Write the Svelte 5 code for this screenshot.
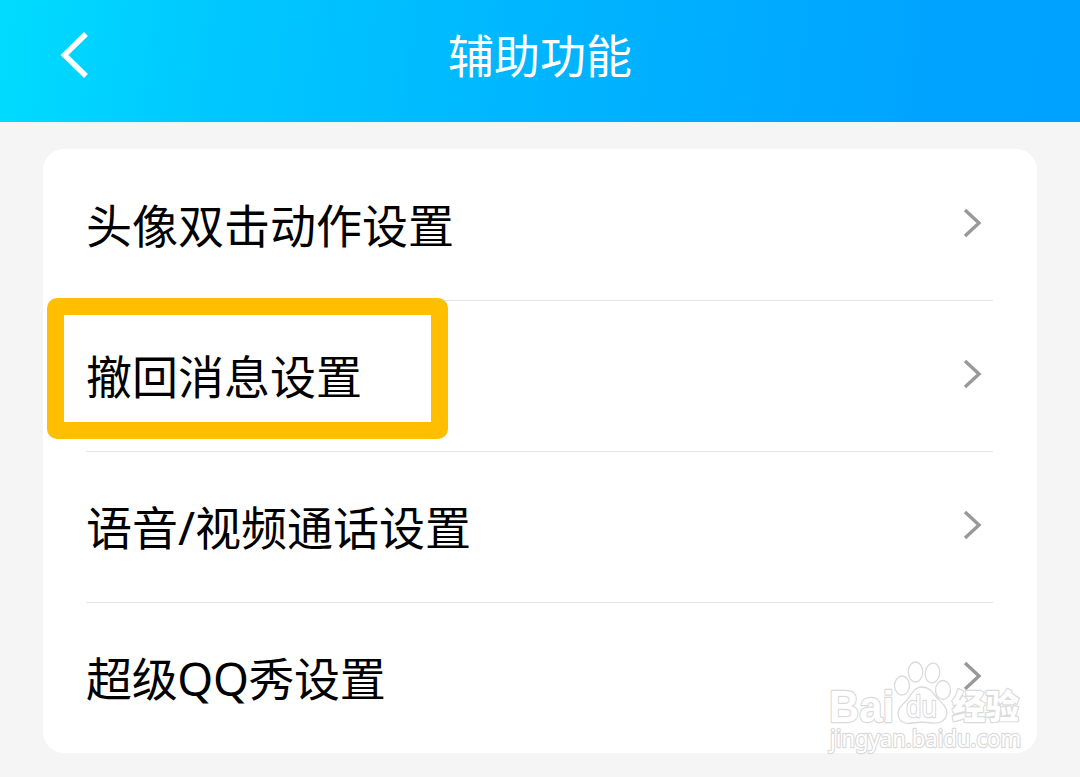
<script lang="ts">
  const items = [
    { label: "头像双击动作设置" },
    { label: "撤回消息设置", marked: true },
    { label: "语音/视频通话设置" },
    { label: "超级QQ秀设置", tight: true }
  ];
</script>

<div class="page">
  <header>
    <button class="back" aria-label="返回">
      <svg width="32" height="50" viewBox="0 0 32 50">
        <path d="M28 4 L6.5 25 L28 46" />
      </svg>
    </button>
    <h1>辅助功能</h1>
  </header>

  <main>
    <ul>
      {#each items as item}
        <li>
          <span class="label" class:tight={item.tight}>{item.label}</span>
          <svg class="chevron" width="20" height="32" viewBox="0 0 20 32">
            <path d="M3 3 L17 16 L3 29" />
          </svg>
          {#if item.marked}
            <div class="mark"></div>
          {/if}
        </li>
      {/each}
    </ul>
  </main>

  <svg class="watermark" width="210" height="100" viewBox="0 0 210 100">
    <g class="outline">
      <text class="bai" x="9" y="65" textLength="65" lengthAdjust="spacingAndGlyphs">Bai</text>
      <ellipse cx="82" cy="28.5" rx="7.5" ry="9.5" />
      <ellipse cx="95.5" cy="15" rx="7.2" ry="10" />
      <ellipse cx="112.5" cy="16" rx="7.2" ry="10" transform="rotate(8 112.5 16)" />
      <ellipse cx="123" cy="33" rx="7.5" ry="9.5" />
      <path d="M102 30 C94 30 92 37 87 43 C82 48 78 51 78 57 C79 66 85 67 92 66 C99 65 106 65 112 66 C121 67 126 63 127 56 C127 50 122 46 117 41 C113 36 110 30 102 30 Z" />
      <text class="du" x="86" y="60" textLength="31" lengthAdjust="spacingAndGlyphs">du</text>
      <text class="jingyan" x="132" y="62" textLength="67" lengthAdjust="spacingAndGlyphs">经验</text>
      <text class="url" x="10" y="90" textLength="191" lengthAdjust="spacingAndGlyphs">jingyan.baidu.com</text>
    </g>
  </svg>
</div>

<style>
  :global(body) {
    margin: 0;
    background: #f5f5f6;
  }
  .page {
    position: relative;
    height: 777px;
    overflow: hidden;
    background: #f5f5f6;
    font-family: "Noto Sans", "Noto Sans CJK SC", sans-serif;
  }
  header {
    display: grid;
    grid-template-columns: 150px 1fr 150px;
    align-items: center;
    box-sizing: border-box;
    height: 122px;
    padding-bottom: 12px;
    background: linear-gradient(98deg, #00dcff 0%, #00c8ff 20%, #00b4ff 52%, #00a4ff 85%, #00a2ff 100%);
  }
  .back {
    display: flex;
    justify-self: start;
    margin-left: 58px;
    padding: 0;
    border: 0;
    background: none;
  }
  .back path {
    fill: none;
    stroke: #fff;
    stroke-width: 5.5;
  }
  h1 {
    margin: 0;
    color: #fff;
    font-size: 46px;
    font-weight: 400;
    line-height: 60px;
    text-align: center;
  }
  main {
    padding: 27px 43px 0;
  }
  ul {
    margin: 0;
    padding: 0 43px;
    border-radius: 21px;
    background: #fff;
    list-style: none;
  }
  li {
    position: relative;
    display: flex;
    align-items: center;
    justify-content: space-between;
    box-sizing: border-box;
    height: 151px;
    padding-right: 12px;
  }
  /* divider sits on the top edge of every row but the first */
  li + li {
    background: linear-gradient(#e5e5e5, #e5e5e5) left top / 907px 1px no-repeat;
  }
  .label {
    color: #000;
    font-size: 46px;
    line-height: 60px;
    white-space: nowrap;
  }
  .label.tight {
    letter-spacing: -0.35px;
  }
  .chevron {
    margin-bottom: 3px;
  }
  .chevron path {
    fill: none;
    stroke: #999;
    stroke-width: 3.4;
  }
  .mark {
    position: absolute;
    top: -2px;
    left: -39px;
    box-sizing: border-box;
    width: 401px;
    height: 141px;
    border: 17px solid #ffbf00;
    border-radius: 10px;
  }
  .watermark {
    position: absolute;
    top: 657px;
    left: 820px;
  }
  .outline {
    fill: #fff;
    stroke: #dadada;
    stroke-width: 1.3;
  }
  .outline text {
    paint-order: stroke;
    stroke-width: 2.4;
    stroke-linejoin: round;
  }
  .bai {
    font: 700 45px "Liberation Sans", sans-serif;
  }
  .du {
    font: 400 29px "Noto Sans", sans-serif;
  }
  .jingyan {
    font: 900 34px "Noto Sans CJK SC", sans-serif;
  }
  .url {
    font: 400 23px "Noto Sans", sans-serif;
  }
</style>
